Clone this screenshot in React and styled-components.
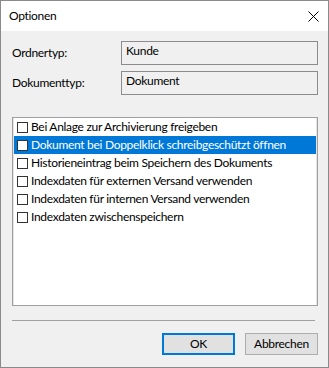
import React from "react";
import styled, { createGlobalStyle } from "styled-components";

const Global = createGlobalStyle`
  html, body { margin: 0; padding: 0; background: #f0f0f0; }
  * { box-sizing: border-box; }
`;

const Window = styled.div`
  width: 329px;
  height: 368px;
  border: 1px solid #8a8a8a;
  background: #f0f0f0;
  display: flex;
  flex-direction: column;
  font-family: Lato, "Liberation Sans", sans-serif;
  font-size: 12px;
  letter-spacing: -0.3px;
  color: #000;
`;

const TitleBar = styled.div`
  height: 30px;
  background: #fff;
  display: flex;
  align-items: center;
  justify-content: space-between;
  padding: 0 9px 0 8px;
`;

const Title = styled.span`
  font-size: 12px;
  line-height: 16px;
  margin-top: -1px;
`;

const Body = styled.div`
  flex: 1;
  display: flex;
  flex-direction: column;
  padding: 10px 10px 12px 11px;
`;

const FieldRow = styled.div`
  display: flex;
  align-items: flex-start;
  height: 24px;
  margin-bottom: ${(p) => p.$gap}px;
`;

const Label = styled.div`
  width: 109px;
  padding-top: 4px;
  line-height: 16px;
`;

const ReadOnlyBox = styled.div`
  flex: 1;
  height: 24px;
  border: 1px solid #8c8c8c;
  background: #f0f0f0;
  padding: 1px 4px;
  line-height: 16px;
`;

const ListBox = styled.div`
  height: 189px;
  background: #fff;
  border: 1px solid #a0a0a0;
  box-shadow: inset 1px 0 0 #e3e3e3, inset -1px 0 0 #e3e3e3;
  padding: 0 1px;
  display: flex;
  flex-direction: column;
`;

const Item = styled.div`
  height: 18px;
  display: flex;
  align-items: center;
  padding-left: 3px;
  background: ${(p) => (p.$selected ? "#0078d7" : "transparent")};
  color: ${(p) => (p.$selected ? "#fff" : "#000")};
  white-space: nowrap;
`;

const Box = styled.span`
  width: 11px;
  height: 11px;
  border: 1px solid #333;
  background: #fff;
  margin-right: 3px;
  flex-shrink: 0;
`;

const ItemText = styled.span`
  line-height: 16px;
`;

const Separator = styled.div`
  height: 1px;
  background: #a0a0a0;
  margin: 14px 3px 12px 0;
`;

const ButtonRow = styled.div`
  display: flex;
  justify-content: flex-end;
  gap: 10px;
`;

const Button = styled.div`
  width: 73px;
  height: 22px;
  display: flex;
  align-items: center;
  justify-content: center;
  background: #e1e1e1;
  border: ${(p) => (p.$default ? "2px solid #0078d7" : "1px solid #adadad")};
  line-height: 16px;
`;

const items = [
  "Bei Anlage zur Archivierung freigeben",
  "Dokument bei Doppelklick schreibgeschützt öffnen",
  "Historieneintrag beim Speichern des Dokuments",
  "Indexdaten für externen Versand verwenden",
  "Indexdaten für internen Versand verwenden",
  "Indexdaten zwischenspeichern",
];

export default function App() {
  return (
    <>
      <Global />
      <Window>
        <TitleBar>
          <Title>Optionen</Title>
          <svg width="11" height="11" viewBox="0 0 11 11">
            <path d="M0.5 0.5 L10.5 10.5 M10.5 0.5 L0.5 10.5" stroke="#000" strokeWidth="1" fill="none" />
          </svg>
        </TitleBar>
        <Body>
          <FieldRow $gap={6}>
            <Label>Ordnertyp:</Label>
            <ReadOnlyBox>Kunde</ReadOnlyBox>
          </FieldRow>
          <FieldRow $gap={22}>
            <Label>Dokumenttyp:</Label>
            <ReadOnlyBox>Dokument</ReadOnlyBox>
          </FieldRow>
          <ListBox>
            {items.map((t, i) => (
              <Item key={t} $selected={i === 1}>
                <Box />
                <ItemText>{t}</ItemText>
              </Item>
            ))}
          </ListBox>
          <Separator />
          <ButtonRow>
            <Button $default>OK</Button>
            <Button>Abbrechen</Button>
          </ButtonRow>
        </Body>
      </Window>
    </>
  );
}
